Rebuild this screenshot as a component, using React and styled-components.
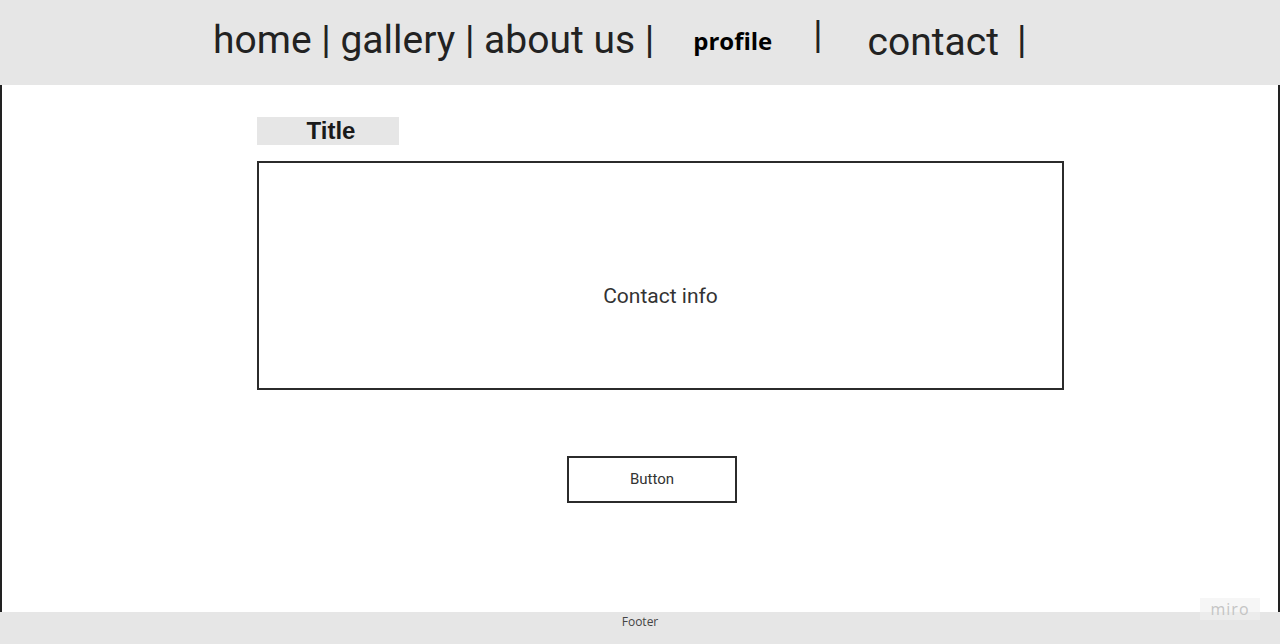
import styled, { createGlobalStyle } from "styled-components";

const GlobalStyle = createGlobalStyle`
  html, body {
    margin: 0;
    padding: 0;
    background: #ffffff;
  }
  body {
    font-family: Roboto, "Liberation Sans", sans-serif;
    color: #222222;
  }
`;

const Page = styled.div`
  display: flex;
  flex-direction: column;
  width: 1280px;
  height: 644px;
  position: relative;
  overflow: hidden;
`;

const Header = styled.header`
  height: 85px;
  background: #e6e6e6;
  display: flex;
  align-items: flex-start;
  padding-left: 213px;
  box-sizing: border-box;
`;

const NavText = styled.span`
  font-family: ${(p) => (p.bold ? '"Open Sans", sans-serif' : "Roboto, sans-serif")};
  font-weight: ${(p) => (p.bold ? 700 : 400)};
  font-size: ${(p) => p.size}px;
  line-height: 1;
  color: ${(p) => (p.bold ? "#000000" : "#222222")};
  margin-top: ${(p) => p.top}px;
  margin-left: ${(p) => p.left || 0}px;
  white-space: nowrap;
`;

const Main = styled.main`
  flex: 1;
  border-left: 2px solid #222222;
  border-right: 2px solid #222222;
  display: flex;
  flex-direction: column;
  align-items: flex-start;
  padding-left: 255px;
  padding-top: 32px;
`;

const TitleBox = styled.div`
  width: 142px;
  height: 28px;
  box-sizing: border-box;
  padding-left: 6px;
  background: #e6e6e6;
  display: flex;
  align-items: center;
  justify-content: center;
  font-family: "Liberation Sans", Arial, sans-serif;
  font-weight: 700;
  font-size: 24px;
  color: #1a1a1a;
`;

const InfoBox = styled.div`
  margin-top: 16px;
  width: 807px;
  height: 229px;
  box-sizing: border-box;
  border: 2px solid #2b2b2b;
  display: flex;
  align-items: center;
  justify-content: center;
  font-size: 21px;
  color: #333333;
  padding-top: 40px;
`;

const ButtonRow = styled.div`
  width: 807px;
  display: flex;
  justify-content: center;
  margin-top: 66px;
`;

const Button = styled.button`
  width: 170px;
  height: 47px;
  margin-left: -17px;
  box-sizing: border-box;
  border: 2px solid #2b2b2b;
  background: #ffffff;
  font-family: Roboto, sans-serif;
  font-size: 15px;
  color: #333333;
  padding: 0 0 2px 0;
`;

const Footer = styled.footer`
  height: 32px;
  background: #e6e6e6;
  display: flex;
  justify-content: center;
  align-items: flex-start;
  padding-top: 1px;
  box-sizing: border-box;
  font-family: "Open Sans", sans-serif;
  font-size: 12px;
  color: #444444;
`;

const Watermark = styled.div`
  position: absolute;
  right: 20px;
  bottom: 24px;
  width: 60px;
  height: 22px;
  background: rgba(240, 240, 240, 0.6);
  display: flex;
  align-items: center;
  justify-content: center;
  font-family: "Open Sans", sans-serif;
  font-size: 16px;
  letter-spacing: 1px;
  color: #c4c4c4;
`;

export default function App() {
  return (
    <Page>
      <GlobalStyle />
      <Header>
        <NavText size={39} top={21}>home | gallery | about us |</NavText>
        <NavText size={24} top={29} left={39} bold>profile</NavText>
        <NavText size={38} top={16} left={41}>|</NavText>
        <NavText size={39} top={23} left={45}>contact</NavText>
        <NavText size={39} top={21} left={18}>|</NavText>
      </Header>
      <Main>
        <TitleBox>Title</TitleBox>
        <InfoBox>Contact info</InfoBox>
        <ButtonRow>
          <Button>Button</Button>
        </ButtonRow>
      </Main>
      <Footer>Footer</Footer>
      <Watermark>miro</Watermark>
    </Page>
  );
}
